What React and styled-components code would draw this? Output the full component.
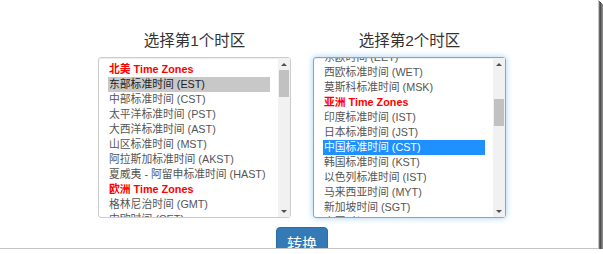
import React from "react";
import styled, { createGlobalStyle } from "styled-components";

const GlobalStyle = createGlobalStyle`
  html, body {
    margin: 0;
    padding: 0;
    background: #ffffff;
  }
  body {
    font-family: "Liberation Sans", "Noto Sans CJK SC", sans-serif;
  }
`;

const FRAME = styled.div`
  box-sizing: border-box;
  width: 599px;
  height: 249px;
  padding: 31px 0 0 6px;
  background: #fff;
  border-right: 1px solid #c4c4c4;
  border-bottom: 1px solid #c4c4c4;
  box-shadow: 1px 1px 0 #6a6a6a, 2px 2px 0 #505050, 3px 3px 0 #6e6e6e,
    4px 4px 0 #8c8c8c, 5px 5px 0 #a8a8a8;
  overflow: hidden;
  display: flex;
  flex-direction: column;
  align-items: center;
`;
const ROW = styled.div`
  display: flex;
  gap: 22px;
`;
const COLUMN = styled.div`
  display: flex;
  flex-direction: column;
  align-items: center;
  gap: 6px;
`;
const TITLE = styled.div`
  font-size: 15.5px;
  line-height: 20px;
  color: #333;
`;
const LISTBOX = styled.div`
  box-sizing: border-box;
  width: 193px;
  height: 161px;
  display: flex;
  border: 1px solid ${(p) => (p.$focused ? "#66afe9" : "#ccc")};
  border-radius: 3px;
  background: #fff;
  box-shadow: ${(p) =>
    p.$focused
      ? "inset 0 1px 1px rgba(0,0,0,.075), 0 0 6px rgba(102,175,233,.6)"
      : "inset 0 1px 1px rgba(0,0,0,.075)"};
`;
const OPTIONS = styled.div`
  flex: 1;
  overflow: hidden;
  padding: 4px 8px 0 9px;
`;
const OPTIONLIST = styled.div`
  margin-top: ${(p) => p.$offset}px;
`;
const OPTION = styled.div`
  height: 15px;
  line-height: 15px;
  padding-left: 1px;
  font-size: 10.8px;
  white-space: nowrap;
  color: ${(p) => (p.$selected === "active" ? "#fff" : p.$selected ? "#222" : "#555")};
  background: ${(p) =>
    p.$selected === "active" ? "#1e90ff" : p.$selected ? "#c8c8c8" : "transparent"};
`;
const GROUP = styled(OPTION)`
  color: #f00;
  font-weight: bold;
`;
const SCROLLBAR = styled.div`
  width: 12px;
  background: #f1f1f1;
  display: flex;
  flex-direction: column;
`;
const ARROW = styled.div`
  height: 12px;
  display: flex;
  align-items: center;
  justify-content: center;
  &::before {
    content: "";
    border-left: 3px solid transparent;
    border-right: 3px solid transparent;
    ${(p) => (p.$down ? "border-top: 3px solid #505050;" : "border-bottom: 3px solid #505050;")}
  }
`;
const TRACK = styled.div`
  flex: 1;
  display: flex;
  flex-direction: column;
  padding: 0 1px;
`;
const THUMB = styled.div`
  margin-top: ${(p) => p.$top}px;
  height: 27px;
  background: #c1c1c1;
`;
const BUTTON = styled.button`
  margin-top: 9px;
  padding: 6px 10px;
  font-family: "Liberation Sans", "Noto Sans CJK SC", sans-serif;
  font-size: 15px;
  line-height: 20px;
  color: #fff;
  background: #337ab7;
  border: 1px solid #2e6da4;
  border-radius: 4px;
`;

const left = [
  { g: "北美 Time Zones" },
  { t: "东部标准时间 (EST)", s: true },
  { t: "中部标准时间 (CST)" },
  { t: "太平洋标准时间 (PST)" },
  { t: "大西洋标准时间 (AST)" },
  { t: "山区标准时间 (MST)" },
  { t: "阿拉斯加标准时间 (AKST)" },
  { t: "夏威夷 - 阿留申标准时间 (HAST)" },
  { g: "欧洲 Time Zones" },
  { t: "格林尼治时间 (GMT)" },
  { t: "中欧时间 (CET)" },
];

const right = [
  { t: "东欧时间 (EET)" },
  { t: "西欧标准时间 (WET)" },
  { t: "莫斯科标准时间 (MSK)" },
  { g: "亚洲 Time Zones" },
  { t: "印度标准时间 (IST)" },
  { t: "日本标准时间 (JST)" },
  { t: "中国标准时间 (CST)", s: "active" },
  { t: "韩国标准时间 (KST)" },
  { t: "以色列标准时间 (IST)" },
  { t: "马来西亚时间 (MYT)" },
  { t: "新加坡时间 (SGT)" },
  { t: "泰国时间 (ICT)" },
];

const ZoneSelect = ({ title, items, offset, thumb, focused }) => (
  <COLUMN>
    <TITLE>{title}</TITLE>
    <LISTBOX $focused={focused}>
      <OPTIONS>
        <OPTIONLIST $offset={offset}>
          {items.map((it, i) =>
            it.g ? (
              <GROUP key={i}>{it.g}</GROUP>
            ) : (
              <OPTION key={i} $selected={it.s}>
                {it.t}
              </OPTION>
            )
          )}
        </OPTIONLIST>
      </OPTIONS>
      <SCROLLBAR>
        <ARROW />
        <TRACK>
          <THUMB $top={thumb} />
        </TRACK>
        <ARROW $down />
      </SCROLLBAR>
    </LISTBOX>
  </COLUMN>
);

const App = () => {
  return (
    <FRAME>
      <GlobalStyle />
      <ROW>
        <ZoneSelect title="选择第1个时区" items={left} offset={0} thumb={0} />
        <ZoneSelect title="选择第2个时区" items={right} offset={-12} thumb={29} focused />
      </ROW>
      <BUTTON>转换</BUTTON>
    </FRAME>
  );
};

export default App;
